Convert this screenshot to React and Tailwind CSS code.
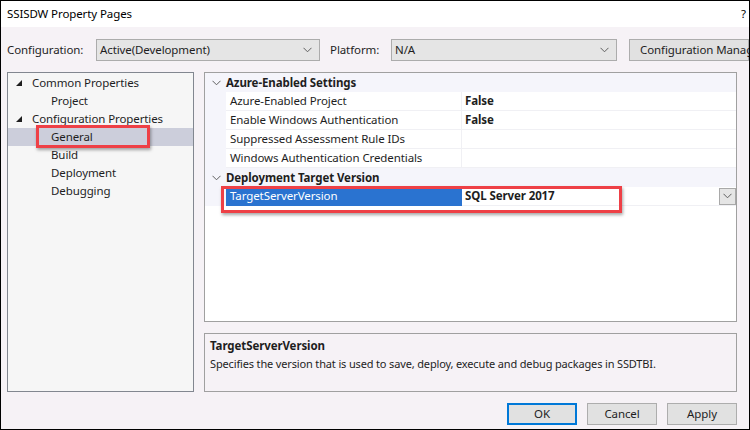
import React from 'react';

const Chevron = ({ className = '' }) => (
  <svg width="9" height="6" viewBox="0 0 9 6" className={className}>
    <polyline points="0.5,0.8 4.5,4.8 8.5,0.8" fill="none" stroke="#5f5f5f" strokeWidth="1" />
  </svg>
);

const Expanded = () => (
  <svg width="6" height="6" viewBox="0 0 6 6" className="shrink-0">
    <polygon points="6,0 6,6 0,6" fill="#1e1e1e" />
  </svg>
);

const Combo = ({ value, width }) => (
  <div className={`${width} h-[22px] bg-[#e5e5e5] border border-[#acacac] flex items-center justify-between pl-[3px] pr-[7px]`}>
    <span>{value}</span>
    <Chevron />
  </div>
);

const treeItems = [
  { label: 'Common Properties', level: 0 },
  { label: 'Project', level: 1 },
  { label: 'Configuration Properties', level: 0 },
  { label: 'General', level: 1, selected: true },
  { label: 'Build', level: 1 },
  { label: 'Deployment', level: 1 },
  { label: 'Debugging', level: 1 },
];

const CategoryRow = ({ label }) => (
  <div className="h-[19px] flex items-center bg-[#f5f5fb]">
    <div className="w-[21px] flex justify-center pl-[2px]">
      <Chevron />
    </div>
    <span className="font-bold text-[#1e1e1e]">{label}</span>
  </div>
);

const PropRow = ({ label, value, selected }) => (
  <div className="h-[19px] flex bg-[#f5f5fb]">
    <div className="w-[21px] shrink-0" />
    <div
      className={`w-[236px] shrink-0 flex items-center pl-[4px] border-r border-b ${
        selected ? 'bg-[#2a73d0] text-white border-[#2a73d0]' : 'bg-white border-[#f0f0f4]'
      }`}
    >
      {label}
    </div>
    <div className="flex-1 bg-white border-b border-[#f0f0f4] flex items-center justify-between pl-[3px]">
      <span className="font-bold">{value}</span>
      {selected && (
        <div className="w-[17px] h-[17px] bg-[#e5e5e5] border border-[#a9a9a9] flex items-center justify-center">
          <Chevron />
        </div>
      )}
    </div>
  </div>
);

const Button = ({ label, primary }) => (
  <button
    className={`w-[70px] h-[22px] bg-[#e1e1e1] flex items-center justify-center ${
      primary ? 'border-2 border-[#0078d7]' : 'border border-[#adadad]'
    }`}
  >
    {label}
  </button>
);

export default function App() {
  return (
    <div
      className="w-[750px] h-[430px] border border-black bg-[#f6f2f6] flex flex-col overflow-hidden text-[11.5px] tracking-[-0.1px] text-[#1e1e1e]"
      style={{ fontFamily: '"Noto Sans", "Open Sans", sans-serif' }}
    >
      {/* Title bar */}
      <div className="h-[26px] shrink-0 bg-white flex items-center justify-between pl-[6px] pr-[3px]">
        <span className="text-black">SSISDW Property Pages</span>
        <span className="text-black">?</span>
      </div>

      {/* Configuration row */}
      <div className="mt-[12px] h-[22px] shrink-0 flex items-center pl-[6px]">
        <span className="w-[89px] shrink-0">Configuration:</span>
        <Combo value="Active(Development)" width="w-[233px]" />
        <span className="w-[61px] shrink-0 ml-[10px]">Platform:</span>
        <Combo value="N/A" width="w-[235px]" />
        <div className="ml-[12px] w-[120px] shrink-0 h-[22px] bg-[#e1e1e1] border border-[#adadad] flex items-center pl-[10px] whitespace-nowrap">
          Configuration Manager...
        </div>
      </div>

      {/* Main area */}
      <div className="mt-[11px] flex pl-[6px]">
        {/* Tree */}
        <div className="relative w-[187px] h-[320px] shrink-0 bg-[#f6f6f6] border border-[#828790] pt-[1px]">
          {treeItems.map((item) => (
            <div
              key={item.label}
              className={`h-[18px] flex items-center ${item.selected ? 'bg-[#cccedb]' : ''}`}
            >
              {item.level === 0 ? (
                <>
                  <div className="w-[24px] shrink-0 flex justify-end pr-[10px]">
                    <Expanded />
                  </div>
                  <span>{item.label}</span>
                </>
              ) : (
                <span className="pl-[43px]">{item.label}</span>
              )}
            </div>
          ))}
          <div className="absolute left-[28px] top-[52px] w-[114px] h-[23px] border-[3px] border-[#ee4046] shadow-[1px_2px_3px_rgba(0,0,0,0.35)]" />
        </div>

        {/* Right column */}
        <div className="ml-[10px] w-[533px] shrink-0 flex flex-col">
          <div className="relative h-[250px] bg-white border border-[#a0a0a0]">
            <CategoryRow label="Azure-Enabled Settings" />
            <PropRow label="Azure-Enabled Project" value="False" />
            <PropRow label="Enable Windows Authentication" value="False" />
            <PropRow label="Suppressed Assessment Rule IDs" value="" />
            <PropRow label="Windows Authentication Credentials" value="" />
            <CategoryRow label="Deployment Target Version" />
            <PropRow label="TargetServerVersion" value="SQL Server 2017" selected />
            <div className="absolute left-[16px] top-[113px] w-[401px] h-[27px] border-[3px] border-[#ee4046] shadow-[1px_2px_3px_rgba(0,0,0,0.35)]" />
          </div>

          <div className="mt-[11px] h-[59px] border border-[#a0a0a0] px-[5px] pt-[3px]">
            <div className="font-bold leading-[18px]">TargetServerVersion</div>
            <div className="leading-[18px] text-[11px] tracking-[-0.15px]">
              Specifies the version that is used to save, deploy, execute and debug packages in SSDTBI.
            </div>
          </div>
        </div>
      </div>

      {/* Buttons */}
      <div className="mt-[11px] flex justify-end gap-[10px] pr-[12px]">
        <Button label="OK" primary />
        <Button label="Cancel" />
        <Button label="Apply" />
      </div>
    </div>
  );
}
